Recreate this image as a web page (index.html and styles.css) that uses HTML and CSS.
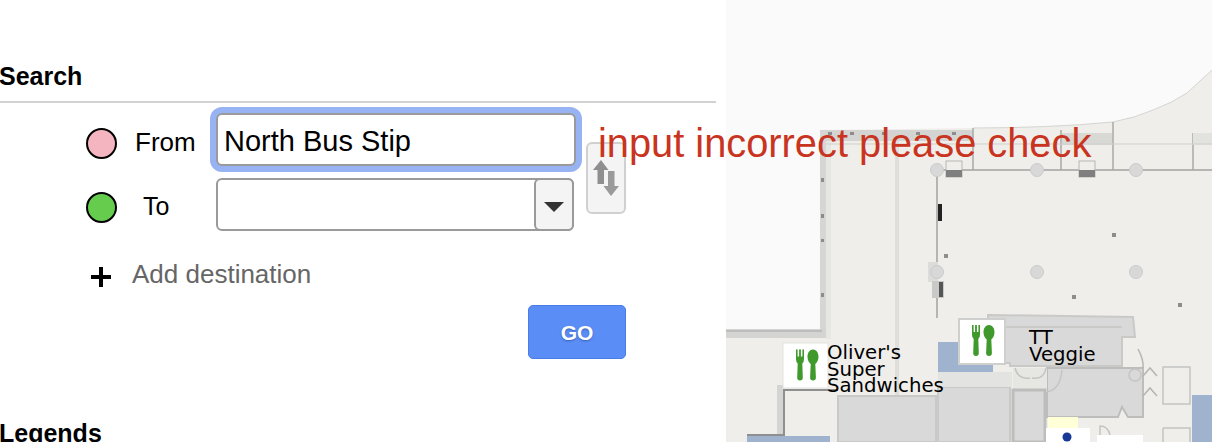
FILE: index.html
```html
<!DOCTYPE html>
<html lang="en">
<head>
<meta charset="utf-8">
<title>Search</title>
<link rel="stylesheet" href="styles.css">
</head>
<body>
<div class="page">
  <section class="sidebar">
    <h2 class="section-title">Search</h2>
    <div class="fields">
      <div class="rows">
        <div class="row">
          <span class="dot dot-from"></span>
          <label class="row-label">From</label>
          <input class="text-input" type="text" value="North Bus Stip">
        </div>
        <div class="row">
          <span class="dot dot-to"></span>
          <label class="row-label row-label-to">To</label>
          <div class="combo">
            <span class="combo-text"></span>
            <span class="combo-btn"><span class="combo-arrow"></span></span>
          </div>
        </div>
      </div>
      <button class="swap" type="button" aria-label="Swap">
        <svg class="swap-icon" width="30" height="40" viewBox="0 0 30 40">
          <path d="M10 1 L2 11 H6.500 V25 H13 V11 H17.500 Z" fill="#8f8f8f"/>
          <path d="M17 12 H23.500 V27 H28 L20 37 L12.500 27 H17 Z" fill="#9a9a9a"/>
        </svg>
      </button>
    </div>
    <div class="add-row">
      <svg class="plus" width="20" height="20" viewBox="0 0 20 20"><path d="M8 0 H12 V8 H20 V12 H12 V20 H8 V12 H0 V8 H8 Z" fill="#000"/></svg>
      <span class="add-text">Add destination</span>
    </div>
    <div class="actions"><button class="go" type="button">GO</button></div>
    <h2 class="section-title legends">Legends</h2>
  </section>

  <section class="map">
    <svg class="floorplan" width="486" height="442" viewBox="726 0 486 442">
      <rect x="726" y="0" width="486" height="442" fill="#fafafa"/>
      <path d="M820 130 L973 128 Q1050 128 1113 122 Q1135 118 1153 110 Q1172 103 1187 93 L1212 70 V442 H726 V338 H820 Z" fill="#efeeea"/>
      <path d="M973 128 Q1050 128 1113 122 Q1135 118 1153 110 Q1172 103 1187 93 L1212 70" fill="none" stroke="#d4d4d0" stroke-width="1"/>
      <!-- outer walls -->
      <rect x="820" y="130" width="153" height="11" fill="#d4d4d2"/>
      <rect x="820" y="130" width="6" height="202" fill="#d6d6d4"/>
      <rect x="726" y="329" width="100" height="9" fill="#d4d4d2"/>
      <rect x="726" y="330" width="96" height="2" fill="#bdbdbd"/>
      <rect x="826" y="141" width="5" height="198" fill="#e6e6e3"/>
      <rect x="895" y="141" width="4" height="301" fill="#dededb"/>
      <path d="M973 128 V170 M1061 130 V170 M1113 122 V170 M1193 133 V170" stroke="#a9a9a6" stroke-width="1.500" fill="none"/>
      <rect x="1062" y="133" width="50" height="12" fill="#d8d8d5"/>
      <rect x="1193" y="133" width="19" height="12" fill="#e2e2df"/>
      <path d="M826 144 H1212" stroke="#cfcfcc" stroke-width="1"/>
      <!-- hall -->
      <path d="M937 170 H1212 M937 170 V318" stroke="#a3a3a1" stroke-width="1.500" fill="none"/>
      <rect x="946" y="161" width="16" height="16" fill="#efeeea" stroke="#b5b5b3"/>
      <rect x="946" y="170" width="16" height="7" fill="#7f7f7f"/>
      <rect x="1079" y="161" width="16" height="16" fill="#efeeea" stroke="#b5b5b3"/>
      <rect x="1079" y="170" width="16" height="7" fill="#7f7f7f"/>
      <rect x="938" y="204" width="4" height="17" fill="#222"/>
      <rect x="928" y="262" width="10" height="20" fill="#dcdcda"/>
      <rect x="932" y="281" width="12" height="17" fill="#c9c9c7"/>
      <rect x="939" y="282" width="4" height="15" fill="#555"/>
      <g fill="#d8d8d8" stroke="#cbcbc9">
        <circle cx="937" cy="170" r="6.500"/><circle cx="1037" cy="170" r="6.500"/><circle cx="1136" cy="170" r="6.500"/>
        <circle cx="937" cy="272" r="6.500"/><circle cx="1037" cy="272" r="6.500"/><circle cx="1136" cy="272" r="6.500"/>
      </g>
      <g fill="#8d8d8d">
        <rect x="1112" y="233" width="4" height="4"/><rect x="944" y="254" width="4" height="4"/><rect x="1072" y="295" width="4" height="4"/><rect x="1178" y="303" width="4" height="4"/>
        <rect x="821" y="178" width="3" height="4"/><rect x="821" y="214" width="3" height="4"/><rect x="821" y="239" width="3" height="3"/><rect x="821" y="293" width="3" height="4"/>
        <rect x="828" y="132" width="4" height="3"/><rect x="850" y="132" width="4" height="3"/><rect x="882" y="132" width="3" height="3"/><rect x="916" y="132" width="4" height="3"/><rect x="952" y="132" width="4" height="3"/>
      </g>
      <!-- blue areas -->
      <rect x="938" y="342" width="55" height="30" fill="#9fb3cf"/>
      <rect x="747" y="436" width="83" height="6" fill="#9fb3cf"/>
      <rect x="1192" y="395" width="20" height="47" fill="#9fb3cf"/>
      <!-- grey rooms -->
      <path d="M988 315 L1133 317 L1135 337 H1122 V366 H1010 V363 H1005 V327 H988 Z" fill="#d9d9d9" stroke="#c9c9c7" stroke-width="2"/>
      <path d="M1005 327 H1122" stroke="#c4c4c2" stroke-width="1.500" fill="none"/>
      <path d="M1047 368 H1143 V417 H1128 L1122 407 L1118 417 H1047 Z" fill="#d9d9d9" stroke="#bdbdbb" stroke-width="2"/>
      <path d="M1013 368 H1047 V392 H1013 Z" fill="#e6e6e3"/>
      <path d="M1015 368 Q1018 380 1030 378 M1032 378 Q1044 380 1046 368 M1047 392 Q1060 390 1062 370" stroke="#c4c4c2" fill="none" stroke-width="1.500"/>
      <rect x="838" y="396" width="98" height="46" fill="#d9d9d9" stroke="#c9c9c7" stroke-width="2"/>
      <rect x="938" y="387" width="72" height="55" fill="#d9d9d9" stroke="#c9c9c7" stroke-width="2"/>
      <rect x="1013" y="390" width="32" height="52" fill="#d9d9d9" stroke="#bdbdbb" stroke-width="3"/>
      <path d="M938 372 H1012 V387 H938 Z" fill="#e3e3e1"/>
      <rect x="777" y="385" width="6" height="50" fill="#d4d4d2"/>
      <path d="M784 389 V435 H747 M784 390 H838" stroke="#8f8f8f" stroke-width="2" fill="none"/>
      <rect x="1163" y="367" width="27" height="37" fill="#efeeea" stroke="#c4c4c2" stroke-width="1.500"/>
      <path d="M1138 349 Q1144 360 1143 368 M1143 376 L1150 368 L1157 376 M1143 396 L1150 388 L1157 396" stroke="#b5b5b3" fill="none" stroke-width="1.500"/>
      <circle cx="1135" cy="375" r="6" fill="none" stroke="#c4c4c2" stroke-width="1.500"/>
      <path d="M1163 428 H1190 V442 M1163 428 V442" stroke="#c4c4c2" stroke-width="1.500" fill="none"/>
      <path d="M1100 435 V426 Q1108 426 1110 435" stroke="#c4c4c2" stroke-width="1.500" fill="none"/>
      <rect x="1048" y="417" width="30" height="11" fill="#ffffd8"/>
      <!-- white pins -->
      <rect x="1097" y="435" width="46" height="7" fill="#fff"/>
      <rect x="1046" y="428" width="44" height="14" fill="#fff"/>
      <circle cx="1067" cy="437" r="4.500" fill="#183a96"/>
      <rect x="959" y="319" width="46" height="45" fill="#fff" stroke="#cfcfcd" stroke-width="2"/>
      <rect x="783" y="343" width="45" height="45" fill="#fff" stroke="#e2e2e0" stroke-width="1"/>
      <defs>
        <g id="food" fill="#3f9a2b">
          <path d="M0 0 H1.600 V7 H3.100 V0 H4.900 V7 H6.400 V0 H8 V9.500 Q8 13 6.300 14 L6.800 28 Q6.800 31 4 31 Q1.200 31 1.200 28 L1.700 14 Q0 13 0 9.500 Z"/>
          <path d="M17 0 C21 0 22.500 4 22.500 7.500 C22.500 11 20.500 13.500 19.300 14.500 L19.900 28 Q19.900 31 17 31 Q14.100 31 14.100 28 L14.700 14.500 C13.500 13.500 11.500 11 11.500 7.500 C11.500 4 13 0 17 0 Z"/>
        </g>
      </defs>
      <use href="#food" x="796" y="349.500"/>
      <use href="#food" x="972" y="325"/>
    </svg>
    <div class="pin-label pin-oliver">Oliver's<br>Super<br>Sandwiches</div>
    <div class="pin-label pin-tt">TT<br>Veggie</div>
  </section>

  <div class="error">input incorrect please check</div>
</div>
</body>
</html>
```
FILE: styles.css
```css
* { box-sizing: border-box; }
html, body { margin: 0; padding: 0; background: #fff; }
body { font-family: "Liberation Sans", Arial, sans-serif; color: #000; }

.page { position: relative; display: flex; width: 1212px; height: 442px; overflow: hidden; }

.sidebar { flex: 0 0 726px; padding-top: 61px; }

.section-title {
  margin: 0 0 0 -1px;
  font-size: 25px;
  font-weight: 700;
  line-height: 30px;
}
.section-title:first-child {
  width: 717px;
  height: 42px;
  border-bottom: 2px solid #d2d2d2;
}
.legends { margin-top: 59px; }

.fields { display: flex; padding: 10px 0 0 86px; }
.rows { display: flex; flex-direction: column; gap: 12px; width: 490px; }
.row { display: flex; align-items: center; height: 53px; }

.dot {
  flex: none;
  width: 31px;
  height: 31px;
  margin-top: 8px;
  border: 2px solid #000;
  border-radius: 50%;
}
.dot-from { background: #f5b5c0; }
.dot-to { background: #66cc4e; margin-top: 5px; }

.row-label { flex: none; width: 99px; padding-left: 18px; font-size: 26px; margin-top: 5px; }
.row-label-to { padding-left: 26px; font-size: 25px; margin-top: 4px; }

.text-input {
  width: 360px;
  height: 53px;
  padding: 3px 6px 0;
  border: 2px solid #9a9a9a;
  border-radius: 6px;
  outline: none;
  box-shadow: 0 0 0 6px #97b3f3;
  background: #fff;
  color: #000;
  font-family: inherit;
  font-size: 29px;
}

.combo {
  display: flex;
  width: 358px;
  height: 53px;
  border: 2px solid #9a9a9a;
  border-radius: 6px;
  background: #fff;
}
.combo-text { flex: 1; }
.combo-btn {
  display: flex;
  align-items: center;
  justify-content: center;
  width: 40px;
  margin: -2px -2px -2px 0;
  border: 2px solid #9a9a9a;
  border-radius: 6px;
  background: #f4f4f4;
}
.combo-arrow {
  width: 0;
  height: 0;
  margin-top: 4px;
  border-left: 10px solid transparent;
  border-right: 10px solid transparent;
  border-top: 10px solid #333;
}

.swap {
  display: flex;
  align-items: center;
  justify-content: center;
  width: 40px;
  height: 72px;
  margin: 29px 0 0 10px;
  padding: 2px 0 0;
  border: 2px solid #d0d0d0;
  border-radius: 6px;
  background: #f4f4f4;
}
.swap-icon { filter: blur(0.5px); }

.add-row { display: flex; align-items: center; gap: 21px; height: 30px; margin: 28px 0 0 91px; }
.plus { flex: none; margin-top: 5px; }
.add-text { color: #666; font-size: 26px; }

.actions { display: flex; justify-content: flex-end; width: 626px; margin-top: 16px; }
.go {
  width: 98px;
  height: 54px;
  padding: 2px 0 0;
  border: 1px solid #4a7ce8;
  border-radius: 5px;
  background: #5b8df6;
  color: #fff;
  font-family: inherit;
  font-size: 21px;
  font-weight: 700;
  text-shadow: 0 1px 2px #3b5fb0;
}

.map { position: relative; flex: 0 0 486px; height: 442px; overflow: hidden; }
.floorplan { display: block; filter: blur(0.4px); }

.pin-label {
  position: absolute;
  color: #000;
  font-family: "DejaVu Sans", sans-serif;
  font-size: 19.700px;
  line-height: 16.500px;
}
.pin-oliver { left: 101px; top: 345px; }
.pin-tt { left: 303px; top: 330px; }

.error {
  position: absolute;
  left: 598px;
  top: 120px;
  color: #c93421;
  font-size: 39.800px;
  line-height: 46px;
  white-space: nowrap;
}
```
